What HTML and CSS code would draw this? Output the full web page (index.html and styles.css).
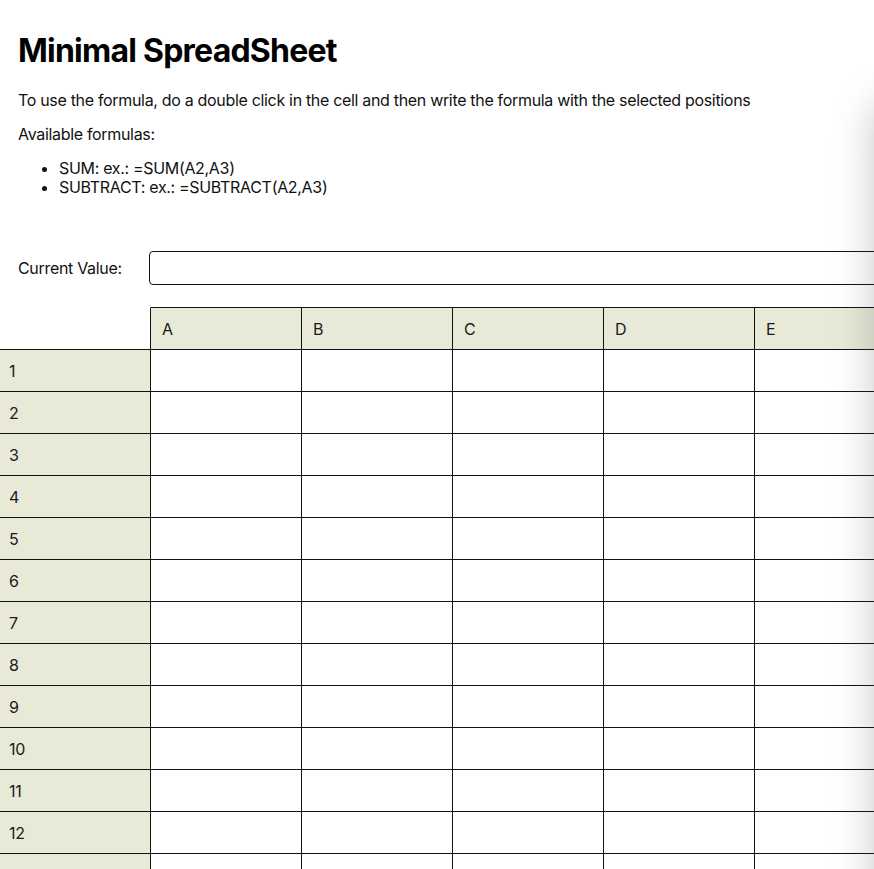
FILE: index.html
```html
<!DOCTYPE html>
<html lang="en">
<head>
<meta charset="utf-8">
<title>Minimal SpreadSheet</title>
<link rel="stylesheet" href="styles.css">
</head>
<body>
<div class="page">
  <div class="intro">
    <h1 class="title">Minimal SpreadSheet</h1>
    <p class="text">To use the formula, do a double click in the cell and then write the formula with the selected positions</p>
    <p class="text">Available formulas:</p>
    <ul class="formulas">
      <li>SUM: ex.: =SUM(A2,A3)</li>
      <li>SUBTRACT: ex.: =SUBTRACT(A2,A3)</li>
    </ul>
    <div class="current">
      <label class="current-label" for="cv">Current Value:</label>
      <input class="current-input" id="cv" type="text">
    </div>
  </div>
  <div class="sheet">
    <div class="cell corner"></div>
    <div class="cell col-head">A</div>
    <div class="cell col-head">B</div>
    <div class="cell col-head">C</div>
    <div class="cell col-head">D</div>
    <div class="cell col-head">E</div>
    <div class="cell col-head">F</div>

    <div class="cell row-head">1</div><div class="cell"></div><div class="cell"></div><div class="cell"></div><div class="cell"></div><div class="cell"></div><div class="cell"></div>
    <div class="cell row-head">2</div><div class="cell"></div><div class="cell"></div><div class="cell"></div><div class="cell"></div><div class="cell"></div><div class="cell"></div>
    <div class="cell row-head">3</div><div class="cell"></div><div class="cell"></div><div class="cell"></div><div class="cell"></div><div class="cell"></div><div class="cell"></div>
    <div class="cell row-head">4</div><div class="cell"></div><div class="cell"></div><div class="cell"></div><div class="cell"></div><div class="cell"></div><div class="cell"></div>
    <div class="cell row-head">5</div><div class="cell"></div><div class="cell"></div><div class="cell"></div><div class="cell"></div><div class="cell"></div><div class="cell"></div>
    <div class="cell row-head">6</div><div class="cell"></div><div class="cell"></div><div class="cell"></div><div class="cell"></div><div class="cell"></div><div class="cell"></div>
    <div class="cell row-head">7</div><div class="cell"></div><div class="cell"></div><div class="cell"></div><div class="cell"></div><div class="cell"></div><div class="cell"></div>
    <div class="cell row-head">8</div><div class="cell"></div><div class="cell"></div><div class="cell"></div><div class="cell"></div><div class="cell"></div><div class="cell"></div>
    <div class="cell row-head">9</div><div class="cell"></div><div class="cell"></div><div class="cell"></div><div class="cell"></div><div class="cell"></div><div class="cell"></div>
    <div class="cell row-head">10</div><div class="cell"></div><div class="cell"></div><div class="cell"></div><div class="cell"></div><div class="cell"></div><div class="cell"></div>
    <div class="cell row-head">11</div><div class="cell"></div><div class="cell"></div><div class="cell"></div><div class="cell"></div><div class="cell"></div><div class="cell"></div>
    <div class="cell row-head">12</div><div class="cell"></div><div class="cell"></div><div class="cell"></div><div class="cell"></div><div class="cell"></div><div class="cell"></div>
    <div class="cell row-head">13</div><div class="cell"></div><div class="cell"></div><div class="cell"></div><div class="cell"></div><div class="cell"></div><div class="cell"></div>
    <div class="cell row-head">14</div><div class="cell"></div><div class="cell"></div><div class="cell"></div><div class="cell"></div><div class="cell"></div><div class="cell"></div>
  </div>
</div>
<div class="edge-shadow"></div>
</body>
</html>
```

FILE: styles.css
```css
html, body {
  margin: 0;
  padding: 0;
  overflow: hidden;
  background: #ffffff;
}

body {
  font-family: Inter, "Noto Sans", "Liberation Sans", sans-serif;
  font-size: 16px;
  letter-spacing: -0.02em;
  color: #111111;
}

.page {
  width: 1100px;
}

.intro {
  padding: 32px 18px 0 18px;
}

.title {
  margin: 0 0 21px 0;
  font-size: 32px;
  font-weight: 700;
  letter-spacing: -0.024em;
  color: #000000;
  line-height: 38px;
}

.text {
  margin: 0 0 15px 0;
  line-height: 19px;
}

.formulas {
  margin: 0;
  padding-left: 41px;
  line-height: 19px;
}

.current {
  display: flex;
  align-items: center;
  margin-top: 54px;
}

.current-label {
  width: 131px;
  flex: none;
}

.current-input {
  width: 760px;
  height: 34px;
  box-sizing: border-box;
  border: 1px solid #111111;
  border-radius: 4px;
  background: transparent;
  font: inherit;
  padding: 0 8px;
}

.sheet {
  margin-top: 22px;
  display: grid;
  grid-template-columns: repeat(7, 151px);
  grid-template-rows: 43px;
  grid-auto-rows: 42px;
}

.cell {
  box-sizing: border-box;
  border-right: 1px solid #111111;
  border-bottom: 1px solid #111111;
  display: flex;
  align-items: center;
  padding-left: 9px;
  color: #1a1a1a;
}

.corner {
  border-top: 1px solid transparent;
  background: #ffffff;
}

.col-head {
  border-top: 1px solid #111111;
  background: #e9e9d8;
  padding-left: 11px;
}

.row-head {
  background: #e9e9d8;
}

.edge-shadow {
  position: fixed;
  top: 100px;
  left: 878px;
  width: 60px;
  height: 2000px;
  border-radius: 30px;
  box-shadow: 0 0 40px 4px rgba(80, 80, 90, 0.32);
  pointer-events: none;
}
```
